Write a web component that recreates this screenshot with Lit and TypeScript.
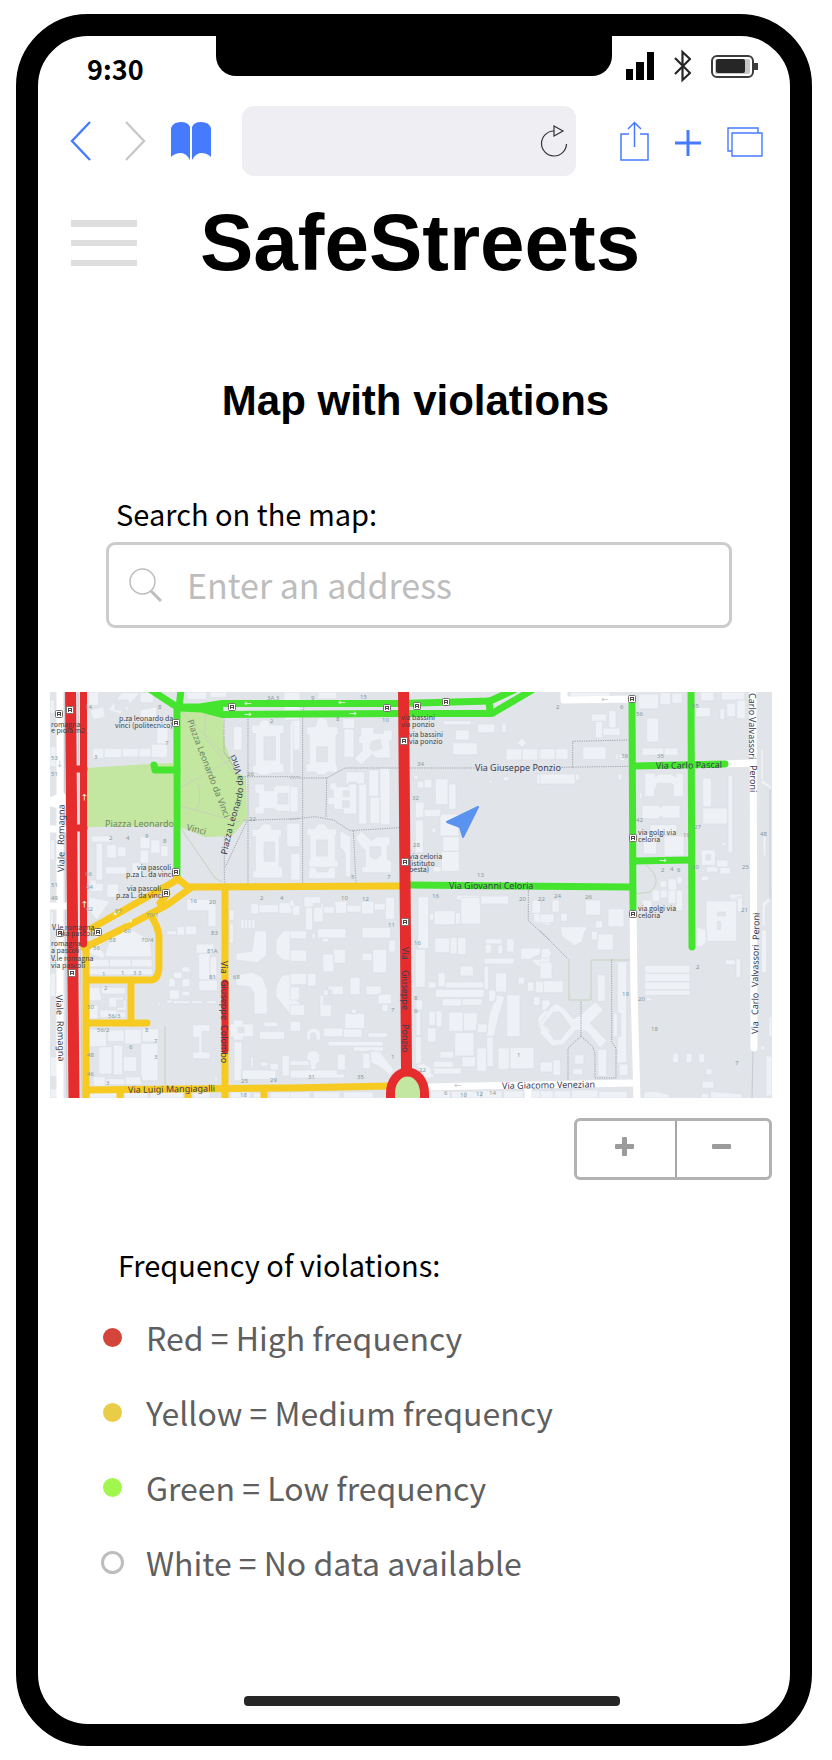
import { LitElement, html, svg, css } from "lit";
import { customElement } from "lit/decorators.js";

/* One square of the base map: footprints are drawn on a grid of a third of a map unit. */
interface Tile {
  at: string;
  rects: number[][];
  shapes: string;
  paths: string;
}

const tiles: Tile[] = [
  {
    at: "translate(40 680) scale(.333333)",
    rects: [
      [158, 205, 34, 30], [192, 205, 54, 28], [246, 205, 50, 26], [296, 205, 38, 26], [334, 192, 48, 40],
      [300, 38, 40, 30], [146, 36, 30, 40], [440, 36, 60, 22], [510, 36, 50, 16], [350, 130, 34, 62],
      [168, 490, 20, 120], [200, 494, 30, 40], [232, 500, 26, 30], [196, 560, 64, 22], [150, 600, 40, 34],
      [300, 470, 30, 36], [332, 480, 28, 40], [362, 498, 22, 32], [300, 510, 26, 40], [276, 548, 30, 44],
      [154, 468, 60, 18], [30, 60, 14, 40], [30, 200, 18, 60], [30, 480, 14, 60], [200, 612, 36, 40],
    ],
    shapes:
      "M205 90L245 38H300L240 102Z M225 60h40v30h-40z M635 135H656L664 120H684L690 135H732V160H722V250H732V278H696L684 285H660L650 278H638V256H646V160H635Z M672 170V240H706V170Z " +
      "M732 36H780V120H732Z M752 120H780V210H752Z M645 312H674V332H700V324L712 316H752L762 326H776V386H762L752 394H712L702 386H672V402H645V380H656V340H645Z M714 340V372H744V340Z " +
      "M636 448H656L668 432H690L696 448H724V470H718V560H728V594H638V572H646V470H636Z M672 486V544H704V486Z M740 430H780V500H740Z M752 520H780V600H752Z " +
      "M580 140h26v70h-26z M150 90L190 80L196 110L160 120Z M300 90L350 80V120H300Z",
    paths:
      "M552 112V215L600 290 M624 116V610 M600 290H780 M612 421L780 416 M620 425L556 560 M553 470V610",
  },
  {
    at: "translate(290 680) scale(.333333)",
    rects: [
      [158, 116, 36, 30], [162, 146, 30, 86], [460, 122, 84, 12], [563, 132, 52, 26], [496, 150, 42, 30],
      [488, 188, 74, 36], [636, 128, 12, 30], [648, 206, 48, 34], [696, 206, 48, 34], [744, 206, 40, 34],
      [740, 282, 44, 30], [640, 290, 18, 12], [598, 300, 8, 10], [382, 304, 20, 20], [402, 298, 24, 26],
      [436, 296, 38, 78], [476, 312, 22, 76], [520, 300, 4, 70], [376, 366, 26, 46], [402, 388, 50, 22],
      [376, 420, 24, 98], [450, 402, 56, 66], [458, 470, 50, 44], [454, 514, 54, 60], [426, 444, 12, 14],
      [168, 276, 56, 36], [206, 312, 24, 120], [236, 270, 30, 80], [270, 264, 30, 170], [240, 350, 30, 80],
      [430, 560, 24, 16], [372, 286, 12, 12], [0, 320, 24, 76], [500, 646, 70, 14], [570, 646, 86, 14],
    ],
    shapes:
      "M50 140H76L82 118L92 112L110 118L116 140H144V165H138V255H142V276H110L106 284H82L78 276H48V252H58V165H50Z M80 200V245H112V200Z " +
      "M212 142H252V160H280V150H306V182H298L302 234H258L248 222L214 254L194 236L216 212V190H206V168H212Z M246 184L270 178L276 204L252 214L238 204Z " +
      "M120 308H140V320H176V306H200V402H160V388H132V374H114V352H130V330H120Z M160 332V350H178V332Z M158 362V382H178V362Z " +
      "M50 446H74L84 432H104L114 446H140V466H136V540H144V562H118L112 576H82L76 562H56V540H60V466H50Z M80 480V528H112V480Z " +
      "M196 474L214 454L244 482L262 470H300V498H292V540H304V578H216V560H226V510L212 498Z M240 500V530L258 538L272 526V500Z " +
      "M682 188L696 174L710 188L696 202Z M58 562H136V596H56Z M150 452L182 470V590H166V520L150 500Z M84 36H140V56H84Z M0 130H10V280H0Z",
    paths:
      "M48 60L38 95V610 M0 294H110L165 264H327 M360 264H555 M110 294L108 412 M0 418L75 410L130 420L180 452L330 443 M190 452L198 610",
  },
  {
    at: "translate(540 680) scale(.333333)",
    rects: [
      [154, 102, 46, 22], [206, 92, 22, 52], [166, 124, 22, 50], [188, 144, 52, 22], [128, 200, 70, 38],
      [228, 222, 8, 16], [238, 222, 16, 20], [0, 206, 46, 32], [46, 206, 38, 32], [0, 282, 106, 30],
      [106, 282, 12, 18], [234, 282, 12, 18], [320, 114, 36, 72], [306, 204, 66, 22], [372, 204, 42, 22],
      [298, 338, 8, 18], [330, 434, 80, 30], [310, 460, 40, 62], [372, 468, 60, 60], [296, 42, 60, 44],
      [360, 38, 32, 36], [396, 40, 30, 30], [466, 82, 46, 28], [540, 86, 14, 32], [560, 70, 26, 40],
      [590, 60, 26, 56], [482, 36, 40, 26], [544, 36, 70, 24], [488, 294, 26, 86], [488, 384, 74, 48],
      [564, 286, 14, 232], [662, 206, 9, 94], [669, 464, 9, 64], [484, 588, 22, 14], [530, 540, 34, 22],
      [540, 562, 32, 20], [500, 560, 34, 16], [544, 488, 14, 8], [360, 602, 20, 20], [384, 596, 26, 40],
      [410, 590, 16, 22], [362, 626, 20, 28], [570, 642, 40, 18], [388, 640, 36, 20], [90, 36, 120, 14],
    ],
    shapes:
      "M314 280H346V290L356 282H394L408 292V280H430V350H400V314L390 310H352L344 330V350H314Z M306 376H354L362 384L370 376H420V414H370L362 408L354 416H306Z " +
      "M484 510H526V556H484Z M662 300H671L695 320V330L662 308Z M498 524V540H512V524Z",
    paths: "M98 262V184L266 180 M64 262L266 259",
  },
  {
    at: "translate(40 890) scale(.333333)",
    rects: [
      [30, 64, 10, 40], [30, 250, 16, 70], [30, 500, 24, 60], [30, 596, 30, 28], [148, 208, 60, 22],
      [208, 208, 66, 22], [274, 208, 62, 22], [148, 236, 190, 18], [148, 292, 36, 40], [180, 292, 76, 20],
      [206, 322, 44, 30], [148, 346, 26, 40], [180, 360, 76, 22], [230, 330, 28, 36], [146, 418, 54, 52],
      [202, 420, 50, 34], [254, 418, 50, 44], [306, 416, 50, 40], [176, 470, 40, 82], [220, 466, 28, 88],
      [250, 500, 40, 44], [302, 460, 52, 112], [160, 560, 36, 28], [196, 566, 60, 18], [256, 560, 50, 24],
      [380, 122, 30, 12], [410, 110, 24, 26], [436, 108, 34, 26], [400, 246, 52, 20], [426, 230, 24, 60],
      [386, 264, 20, 26], [388, 300, 30, 28], [426, 304, 24, 14], [468, 162, 54, 28], [476, 190, 34, 80],
      [510, 200, 20, 60], [476, 270, 56, 32], [380, 330, 18, 10], [398, 332, 50, 9], [455, 332, 32, 9],
      [500, 332, 28, 9], [354, 336, 6, 12], [524, 560, 8, 14], [632, 40, 24, 32], [656, 44, 60, 24],
      [716, 38, 40, 32], [756, 46, 24, 30], [602, 88, 10, 28], [613, 88, 10, 28], [624, 88, 10, 28],
      [635, 88, 10, 28], [568, 60, 14, 30], [570, 100, 10, 60], [672, 396, 40, 14], [658, 424, 76, 24],
      [582, 456, 24, 116], [604, 540, 104, 28], [632, 500, 8, 32], [660, 516, 24, 12], [690, 520, 26, 20],
      [726, 496, 22, 62], [756, 540, 24, 26], [150, 606, 86, 18], [254, 606, 70, 18], [330, 606, 100, 18],
      [460, 606, 50, 18], [572, 606, 60, 18], [640, 608, 24, 16], [690, 606, 90, 18],
    ],
    shapes:
      "M146 190L170 130L210 150L190 206Z M176 170L262 112L330 150L336 200H200Z M146 60V20L210 34L170 90Z M440 28H500L528 44V110H504V62H440Z " +
      "M458 404H510V424H486V486H510V506H458V486H476V442H458Z M644 122H680V196L652 218L588 210V190L636 184Z M588 256L636 246L668 262L682 300V372H642V310L630 290L588 286Z " +
      "M780 122H730L708 150V190L728 210H780V180H750V146H780Z M780 250L726 256L708 290V320L750 372H780V340L750 310V290L780 280Z M580 390H610V402H640V440H610V450H580V440H570V402H580Z M594 412V428H612V412Z",
    paths: "",
  },
  {
    at: "translate(290 890) scale(.333333)",
    rects: [
      [0, 30, 12, 20], [42, 20, 50, 32], [46, 52, 22, 68], [70, 40, 30, 56], [100, 50, 36, 20],
      [134, 34, 36, 36], [170, 46, 44, 20], [214, 34, 38, 38], [252, 40, 34, 20], [286, 22, 28, 66],
      [82, 116, 86, 28], [96, 144, 20, 12], [216, 112, 86, 32], [0, 122, 50, 24], [66, 130, 10, 16],
      [0, 180, 50, 34], [98, 192, 34, 54], [130, 178, 36, 42], [216, 190, 30, 22], [248, 178, 42, 70],
      [296, 150, 20, 36], [0, 250, 50, 34], [52, 250, 26, 38], [0, 290, 28, 40], [180, 262, 30, 52],
      [114, 288, 46, 26], [100, 300, 26, 44], [90, 316, 34, 64], [228, 288, 46, 26], [264, 312, 40, 30],
      [276, 342, 18, 22], [0, 344, 44, 32], [184, 358, 16, 14], [164, 370, 60, 46], [100, 414, 60, 26],
      [160, 416, 56, 26], [234, 428, 58, 14], [0, 394, 32, 30], [114, 454, 166, 14], [190, 470, 90, 14],
      [0, 512, 60, 14], [0, 540, 164, 24], [142, 492, 24, 60], [218, 490, 24, 46], [384, 20, 32, 156],
      [376, 178, 30, 114], [432, 62, 64, 42], [496, 68, 16, 34], [418, 70, 14, 20], [512, 22, 60, 80],
      [570, 18, 86, 24], [434, 144, 46, 44], [480, 142, 22, 50], [502, 142, 26, 52], [586, 146, 50, 16],
      [586, 162, 18, 28], [624, 164, 14, 28], [650, 146, 22, 40], [582, 204, 90, 18], [510, 228, 40, 30],
      [444, 248, 22, 42], [582, 228, 14, 70], [466, 276, 116, 18], [436, 298, 146, 24], [414, 276, 24, 18],
      [616, 248, 34, 58], [596, 300, 22, 34], [456, 326, 60, 22], [516, 326, 60, 20], [378, 330, 20, 30],
      [378, 366, 14, 70], [376, 440, 18, 82], [416, 364, 20, 50], [438, 362, 18, 48], [412, 406, 26, 50],
      [476, 366, 44, 58], [520, 368, 42, 54], [494, 428, 58, 70], [560, 402, 32, 26], [650, 314, 40, 126],
      [624, 474, 36, 64], [658, 472, 74, 64], [450, 484, 40, 20], [430, 514, 60, 18], [424, 534, 90, 18],
      [516, 500, 40, 30], [560, 474, 30, 70], [590, 440, 20, 90], [692, 174, 60, 34], [752, 174, 30, 20],
      [726, 30, 26, 40], [684, 262, 20, 20], [736, 274, 44, 34], [712, 276, 20, 28], [730, 320, 20, 26],
      [756, 330, 24, 30], [420, 602, 60, 22], [484, 604, 40, 20], [528, 604, 44, 20], [576, 602, 60, 22],
      [640, 602, 60, 22], [724, 602, 56, 22], [0, 606, 60, 18], [70, 606, 80, 18], [160, 606, 90, 18],
      [752, 516, 30, 30],
    ],
    shapes:
      "M50 506L52 490L64 482L80 484L90 496L88 514L78 524V540H62V524Z M50 430A22 22 0 0 1 92 430V450H78V432A10 10 0 0 0 62 432V450H50Z M238 480L270 486L312 540L300 556L270 530L240 516Z " +
      "M620 314L644 320L626 380L612 440H588L598 372Z M780 346L744 382V414L780 440V418L762 404V392L780 376Z M720 206L780 180V262H752V236Z M378 524L400 520L432 540V560L412 566Z M730 70L780 74V108L732 96Z",
    paths: "M715 0V92L780 152",
  },
  {
    at: "translate(540 890) scale(.333333)",
    rects: [
      [36, 30, 22, 36], [0, 72, 42, 26], [62, 70, 20, 24], [136, 30, 46, 46], [204, 56, 48, 54],
      [166, 92, 22, 22], [154, 124, 20, 26], [172, 132, 48, 48], [0, 216, 36, 50], [10, 272, 60, 36],
      [232, 216, 28, 302], [172, 254, 24, 80], [220, 370, 22, 70], [174, 478, 26, 80], [104, 494, 28, 28],
      [98, 536, 30, 18], [238, 522, 26, 34], [0, 516, 38, 30], [38, 510, 24, 46], [314, 226, 136, 24],
      [314, 250, 136, 25], [314, 275, 136, 25], [314, 300, 136, 16], [318, 324, 18, 8], [398, 490, 18, 28],
      [438, 490, 18, 28], [476, 490, 18, 28], [498, 536, 18, 18], [486, 574, 36, 20], [484, 610, 22, 14],
      [588, 206, 14, 56], [556, 210, 30, 14], [568, 12, 40, 12], [592, 20, 16, 44],
      [664, 120, 16, 128], [686, 380, 10, 60], [678, 498, 18, 120], [662, 466, 12, 14], [306, 30, 30, 30],
      [336, 0, 24, 34], [360, 0, 22, 24], [384, 0, 24, 40], [408, 0, 20, 62], [0, 602, 40, 22],
      [42, 602, 50, 22], [94, 600, 80, 24], [176, 604, 86, 20],
    ],
    shapes:
      "M498 32H590V154H498Z M532 66V78H556V66Z M532 94V118H542V94Z M60 110H140V124H134L126 156L100 168L94 158L82 152L66 138Z M4 180A18 18 0 0 1 34 190A18 18 0 0 1 4 200Z M312 606L350 604L388 614V624H312Z M512 604L606 612V624H512Z M666 40L695 14V30L676 48V108H666Z M470 112L500 118V154L486 170H470Z " +
      "M0 400L32 352L48 340L70 352L100 386L122 374L166 336L190 360L150 400L200 452L180 474L140 424L108 420L68 464L36 468L0 430Z M10 404L42 448H62L92 410L60 366H40Z",
    paths:
      "M0 122L85 208 M215 208V455L228 475V564H165V490L158 470L123 438V332 M123 438L84 475V570",
  },
];

const whiteRoads = [
  "M60 690V1100", "M48 829H68", "M48 906H68", "M48 802L62 796V806Z", "M564 690V700L632 699V704",
  "M633 905L634 990L637 1100", "M425 1087L633 1083", "M528 1086V1100", "M722 764L752 763", "M753 690L754 1048",
];
const yellowRoads = [
  "M177 880L140 901L92 928", "M177 878L188 887L400 886", "M192 887L167 905L120 930L84 948", "M167 894L160 903",
  "M150 914Q158 926 159 936V968Q158 980 151 980H87", "M131 980V1023", "M88 1023H147", "M86 944V1100",
  "M225 887V1100", "M86 1090L290 1088L390 1086", "M120 1090V1100", "M188 1090V1100", "M264 1089V1100",
];
const greenRoads = [
  "M148 688L177 707", "M181 690L179 708", "M177 706V876", "M154 765L155 770H177",
  "M178 707H200L222 703.5H400L490 701L514 690", "M180 708L202 709L223 714.5L400 713.5H492L532 690", "M200 708L220 709",
  "M489 701L490 713", "M410 885L630 887", "M632 703L633 909", "M691 690L692 947", "M635 766L725 764", "M633 861L690 860",
];
const thinRed = ["M83.5 690L83.5 944", "M76 769H84", "M76 828H84", "M225 983V1050"];

type Label = [x: number, y: number, text: string, turn?: number];

/* Names on steep streets are set word by word, as the words stand far apart there. */
const streets: Label[] = [
  [475, 771, "Via  Giuseppe  Ponzio"],
  [449, 889, "Via  Giovanni  Celoria"],
  [656, 769, "Via  Carlo  Pascal", -1],
  [502, 1089, "Via  Giacomo  Venezian", -1],
  [128, 1093, "Via  Luigi  Mangiagalli", -1],
  [64, 872, "Viale", -89], [64, 845, "Romagna", -89],
  [56, 995, "Viale", 88], [57, 1021, "Romagna", 88],
  [749, 693, "Carlo", 90], [749, 717, "Valvassori", 90], [750, 765, "Peroni", 90],
  [758, 1034, "Via", -89], [758, 1015, "Carlo", -89], [758, 987, "Valvassori", -89], [759, 940, "Peroni", -89],
  [221, 961, "Via", 90], [221, 980, "Giuseppe", 90], [221, 1025, "Colombo", 90],
  [402, 947, "Via", 90], [402, 970, "Giuseppe", 90], [402, 1024, "Ponzio", 90],
];
const squares: Label[] = [
  [105, 827, "Piazza  Leonardo"],
  [186, 830, "Vinci", 14],
  [187, 721, "Piazza  Leonardo  da  Vinci", 69],
];
const stops: Label[] = [
  [119, 721, "p.za leonardo da"], [115, 728, "vinci (politecnico)"],
  [137, 870, "via pascoli"], [126, 877, "p.za L. da vinci"],
  [127, 891, "via pascoli"], [116, 898, "p.za L. da vinci"],
  [51, 727, "romagna"], [51, 733, "e piola m2"],
  [52, 930, "V.le romagna"], [60, 936, "via pascoli"],
  [51, 946, "romagna"], [51, 953, "a pascoli"],
  [51, 961, "V.le romagna"], [51, 968, "via pascoli"],
  [401, 720, "via bassini"], [401, 727, "via ponzio"],
  [409, 737, "via bassini"], [409, 744, "via ponzio"],
  [409, 859, "via celoria"], [409, 866, "(istituto"], [409, 872, "besta)"],
  [638, 835, "via golgi via"], [638, 842, "celoria"],
  [638, 911, "via golgi via"], [638, 918, "celoria"],
];
const numbers: Label[] = [
  [85, 709, "14"], [158, 709, "8"], [94, 759, "3"], [165, 745, "7"], [267, 700, "3A  3"], [270, 723, "2"],
  [109, 840, "2"], [126, 840, "4"], [145, 838, "9"], [163, 843, "8"], [85, 876, "66"], [86, 889, "64"],
  [51, 760, "53"], [51, 776, "51"], [51, 887, "51"], [51, 900, "49"], [247, 776, "26"], [249, 821, "22"],
  [311, 700, "9"], [360, 699, "15"], [336, 721, "8"], [382, 722, "10"], [417, 766, "34"], [412, 800, "32"],
  [413, 847, "28"], [477, 877, "13"], [351, 879, "5"], [387, 879, "7"], [341, 900, "10"], [362, 901, "12"],
  [432, 898, "16"], [556, 709, "2"], [620, 709, "6"], [636, 716, "56"], [621, 758, "39"], [657, 758, "35"],
  [692, 708, "55"], [636, 822, "42"], [683, 837, "19"], [694, 829, "27"], [692, 869, "20"], [760, 836, "48"],
  [742, 869, "25"], [661, 872, "2"], [670, 871, "4"], [677, 872, "6"], [554, 898, "24"], [585, 899, "26"],
  [519, 901, "20"], [538, 901, "22"], [86, 911, "62"], [115, 913, "57"], [146, 917, "70/1"], [141, 942, "70/4"],
  [109, 942, "58"], [93, 950, "56"], [124, 933, "60"], [190, 903, "16"], [209, 904, "20"], [260, 900, "2"],
  [280, 900, "4"], [211, 935, "83"], [207, 953, "81A"], [209, 979, "81"], [233, 979, "68"], [102, 976, "1"],
  [121, 975, "1"], [133, 975, "3  3"], [104, 990, "2"], [108, 1018, "56/3"], [87, 1009, "50"], [97, 1032, "56/2"],
  [145, 1032, "8"], [154, 1043, "7"], [129, 1049, "6"], [154, 1059, "3"], [87, 1057, "48"], [87, 1076, "46"],
  [106, 1085, "3"], [241, 1083, "25"], [270, 1082, "29"], [240, 1097, "18"],
  [388, 927, "11"], [414, 945, "16"], [414, 1000, "8"], [414, 1013, "6"], [391, 1012, "7"], [391, 1059, "1"],
  [419, 1072, "22"], [308, 1079, "31"], [357, 1079, "35"], [444, 1095, "6"], [460, 1097, "10"], [476, 1096, "12"],
  [489, 1095, "14"], [517, 1057, "1"], [622, 996, "19"], [638, 1001, "20"], [696, 969, "2"], [741, 912, "21"],
  [651, 1031, "18"], [735, 1065, "7"],
];
const arrows: Label[] = [
  [244, 706, "←"], [244, 717, "→"], [338, 705, "←"], [349, 716, "→"], [659, 863, "→"],
  [87, 801, "→", -90], [87, 908, "→", -90], [115, 917, "←", -27], [127, 926, "→", -27],
];
const paleArrows: Label[] = [[601, 702, "←"], [454, 1088, "←"], [57, 760, "→", 90]];
const badges: number[][] = [
  [59, 714], [70, 710], [176, 723], [176, 872], [166, 893], [232, 707], [387, 708], [417, 706], [446, 702],
  [404, 741], [405, 862], [405, 922], [632, 699], [633, 838], [633, 914], [98, 932], [60, 933], [72, 973],
];

const drawLabels = (list: Label[]) =>
  list.map(([x, y, text, turn]) => svg`<text x=${x} y=${y} transform=${`rotate(${turn ?? 0} ${x} ${y})`}>${text}</text>`);
const drawRoads = (list: string[]) => list.map((d) => svg`<path d=${d} />`);

@customElement("violations-map")
export class ViolationsMap extends LitElement {
  static styles = css`
    :host { display: block; }
    .map { display: block; width: 100%; height: auto; background: #e1e4e9; font-family: "Noto Sans", sans-serif; }
    .park { fill: #c3e6a0; }
    .buildings { fill: #eef2f6; stroke: #dce0e6; stroke-width: 2; }
    .walks { fill: none; stroke: #a3a6ae; stroke-width: 3; stroke-dasharray: 4 3; }
    .trail { fill: none; stroke: #c6d3bb; stroke-width: 1; }
    .road { fill: none; stroke-width: 7; stroke-linejoin: round; stroke-linecap: round; }
    .white { stroke: #fff; }
    .yellow { stroke: #f6ca20; }
    .green { stroke: #45e52f; }
    .red { stroke: #e52d2d; }
    .wide { stroke-width: 11; }
    .kerb { stroke: #c6cad2; stroke-width: 1; fill: none; }
    .roundabout { fill: #c3e6a0; stroke: #e52d2d; stroke-width: 9; }
    .streets, .squares, .stops, .numbers { white-space: pre; }
    .streets { font-size: 9px; fill: #3b3b52; }
    .squares { font-size: 9px; fill: #6f8467; }
    .stops { font-size: 7px; fill: #3d3d44; font-family: "Noto Sans CJK SC", "Noto Sans", sans-serif; }
    .numbers { font-size: 6px; fill: #84999c; }
    .arrows { font-size: 9px; fill: #e8ffe4; font-family: "DejaVu Sans", sans-serif; }
    .pale { fill: #c4c6cb; }
    .badge { fill: #fff; stroke: #77716c; stroke-width: 1; }
    .bus { fill: #4d4743; }
    .here { fill: #5a93ef; stroke: #5a93ef; stroke-width: 2; stroke-linejoin: round; }
  `;

  render() {
    return html`
      <svg class="map" viewBox="50 692 722 406" role="img" aria-label="Map with violations">
        <g class="park">
          <path d="M87 768L150 764L173 763V826L87 827Z" />
          <path d="M180 711L222 713L225 745L236 772L246 778L247 818L232 836L205 837L180 827Z" />
        </g>
        <path class="trail" d="M182 712L230 760L180 788M198 783Q202 800 196 812M180 806L240 822M205 712V738L236 775M180 827L215 878L222 882M165 1026V1085M569 960V1000H591V960H630M646 865Q664 880 650 892L636 894" />
        ${tiles.map(
          (tile) => svg`<g transform=${tile.at}>
            <path class="buildings" fill-rule="evenodd" d=${tile.rects.map(([x, y, w, h]) => `M${x} ${y}h${w}v${h}h${-w}z`).join("") + tile.shapes} />
            <path class="walks" d=${tile.paths} />
          </g>`,
        )}
        <path class="kerb" d="M64 692L67 1098M78 692L82 1098M770 790V900M753 1050L752 1098" />
        <g class="road white">${drawRoads(whiteRoads)}</g>
        <g class="road green">${drawRoads(greenRoads)}</g>
        <g class="road yellow">${drawRoads(yellowRoads)}</g>
        <g class="road red">${drawRoads(thinRed)}</g>
        <path class="road red wide" d="M70.5 686L74 1104" />
        <path class="road red wide" d="M403.5 686L406.5 1070" />
        <path class="roundabout" d="M390.5 1104V1093A17 21 0 0 1 424.5 1093V1104" />
        <g class="arrows">${drawLabels(arrows)}</g>
        <g class="arrows pale">${drawLabels(paleArrows)}</g>
        ${badges.map(
          ([x, y]) => svg`<rect class="badge" x=${x - 3.5} y=${y - 3.5} width="7" height="7" rx="1" />
            <path class="bus" fill-rule="evenodd" d=${`M${x - 2} ${y - 2}h4v4h-1v-1h-2v1h-1z M${x - 1} ${y - 1}v1h2v-1z`} />`,
        )}
        <g class="numbers">${drawLabels(numbers)}</g>
        <g class="squares">${drawLabels(squares)}</g>
        <g class="stops">${drawLabels(stops)}</g>
        <g class="streets">
          ${drawLabels(streets)}
          <path id="bend" fill="none" d="M227 855Q233 824 241 802Q248 775 230 746" />
          <text><textPath href="#bend">Piazza  Leonardo  da  Vinci</textPath></text>
        </g>
        <path class="here" d="M478 807L447 822L460 827L463 837Z" />
      </svg>
    `;
  }
}

const legend = [
  { tone: "high", text: "Red = High frequency" },
  { tone: "medium", text: "Yellow = Medium frequency" },
  { tone: "low", text: "Green = Low frequency" },
  { tone: "none", text: "White = No data available" },
];

@customElement("app-root")
export class AppRoot extends LitElement {
  static styles = css`
    :host { display: block; background: #fff; color: #000; font-family: "Noto Sans CJK SC", "Noto Sans", sans-serif; }
    * { box-sizing: border-box; }
    button { padding: 0; border: 0; background: none; color: inherit; font: inherit; display: flex; align-items: center; justify-content: center; cursor: pointer; }
    svg { display: block; }
    h1, h2, h3, ul { margin: 0; padding: 0; }
    .phone { margin: 14px 20px 14px 16px; border: 22px solid #000; border-radius: 72px; padding-bottom: 18px; }

    .status { display: grid; grid-template-columns: 1fr 396px 1fr; height: 70px; }
    .time { padding: 13px 0 0 49px; font-size: 27px; line-height: 40px; font-weight: 700; }
    .notch { height: 40px; background: #000; border-radius: 0 0 20px 20px; }
    .signals { display: flex; align-items: center; justify-content: flex-end; gap: 20px; height: 60px; padding-right: 32px; }

    .toolbar { display: flex; align-items: center; height: 70px; padding: 0 27px 0 32px; color: #467bff; }
    .nav { display: flex; align-items: center; gap: 34px; margin-right: 25px; }
    .address { flex: 1; min-width: 0; display: flex; align-items: center; height: 70px; margin: 0 44px 0 31px; padding-right: 8px; border-radius: 12px; background: #eeeef3; }
    .address input { flex: 1; min-width: 0; height: 100%; padding: 0 16px; border: 0; background: none; font: inherit; font-size: 24px; outline: none; }
    .tools { display: flex; align-items: center; gap: 26px; }

    .brand { display: flex; align-items: center; gap: 63px; margin: 27px 32px 0 33px; }
    .brand h1 { font: 700 80px/80px "Liberation Sans", Arial, sans-serif; }
    .subtitle { margin: 94px 32px 0 35px; text-align: center; font: 700 42px/48px "Liberation Sans", Arial, sans-serif; }

    .search { margin: 68px 58px 0 68px; }
    .search label { display: block; padding-left: 10px; font-size: 29px; line-height: 40px; }
    .box { display: flex; align-items: center; gap: 24px; height: 86px; margin-top: 9px; padding-left: 20px; border: 3px solid #ccc; border-radius: 9px; }
    .box input { flex: 1; min-width: 0; height: 100%; padding: 0 0 2px; border: 0; outline: none; background: none; font: inherit; font-size: 34px; }
    .box input::placeholder { color: #bdbdbd; opacity: 1; }

    .view { margin: 64px 18px 0 12px; }
    .zoom { display: grid; grid-template-columns: 51fr 49fr; width: 198px; height: 62px; margin: 20px 0 0 auto; border: 3px solid #b2b2b2; border-radius: 6px; }
    .zoom button { padding: 0 3px 6px 0; }
    .zoom button + button { border-left: 2px solid #a6a6a6; }

    .legend { margin: 64px 58px 0 63px; }
    .legend h3 { padding-left: 17px; font-size: 29px; line-height: 40px; font-weight: 400; }
    .legend ul { list-style: none; display: flex; flex-direction: column; gap: 27px; margin-top: 29px; }
    .legend li { display: flex; align-items: center; gap: 22px; color: #5f5f5f; font-size: 32px; line-height: 48px; }
    .dot { flex: none; width: 23px; height: 23px; border: 2px solid #fff; border-radius: 50%; }
    .high { background-color: #d3453a; }
    .medium { background-color: #e9cc48; }
    .low { background-color: #a1f74d; }
    .none { border: 3px solid #bdbdbd; }

    .home { width: 50%; height: 10px; margin: 110px auto 0 206px; border-radius: 4px; background: #262626; }
  `;

  render() {
    return html`
      <div class="phone">
        <div class="status">
          <div class="time">9:30</div>
          <div class="notch"></div>
          <div class="signals">
            <svg width="28" height="28" viewBox="0 0 28 28"><path d="M0 17h7v11H0zM10 10h8v18h-8zM21 0h7v28h-7z" /></svg>
            <svg width="17" height="34" viewBox="0 0 17 34" fill="none" stroke="#262626" stroke-width="2.2"><path d="M1 9L16 24L8.500 31V3L16 10L1 25" /></svg>
            <svg width="47" height="24" viewBox="0 0 47 24">
              <rect x="1" y="2" width="41" height="21" rx="5" fill="#fff" stroke="#3c3c3c" stroke-width="2" />
              <rect x="4" y="5" width="35" height="15" rx="2" fill="#c6c6c6" />
              <rect x="5" y="5" width="29" height="14" rx="2" fill="#262626" />
              <path d="M43 9h4v7h-4z" fill="#3c3c3c" />
            </svg>
          </div>
        </div>

        <div class="toolbar">
          <div class="nav">
            <button aria-label="Back"><svg width="21" height="40" viewBox="0 0 21 40" fill="none" stroke="#467bff" stroke-width="2.400"><path d="M20 1L2 20L20 39" /></svg></button>
            <button aria-label="Forward"><svg width="21" height="40" viewBox="0 0 21 40" fill="none" stroke="#c8c8cc" stroke-width="2.400"><path d="M1 1L19 20L1 39" /></svg></button>
          </div>
          <button aria-label="Bookmarks">
            <svg width="40" height="38" viewBox="0 0 40 38" fill="currentColor">
              <path d="M0 6Q2 0 10 0Q17 0 19 5V38Q15 31 10 31Q4 31 0 35Z" />
              <path d="M40 6Q38 0 30 0Q23 0 21 5V38Q25 31 30 31Q36 31 40 35Z" />
            </svg>
          </button>
          <div class="address">
            <input type="text" aria-label="Address" />
            <button aria-label="Reload">
              <svg width="28" height="32" viewBox="0 0 28 32" fill="none" stroke="#333" stroke-width="1.200">
                <path d="M14 6A12.500 12.500 0 1 0 26.500 19" />
                <path d="M14 1L23 6L14 11Z" />
              </svg>
            </button>
          </div>
          <div class="tools">
            <button aria-label="Share">
              <svg width="29" height="40" viewBox="0 0 29 40" fill="none" stroke="currentColor" stroke-width="1.500"><path d="M9 13H1V39H28V13H20M14.500 26V2M8 8L14.500 1.500L21 8" /></svg>
            </button>
            <button aria-label="New tab">
              <svg width="26" height="30" viewBox="0 0 26 30" fill="none" stroke="currentColor" stroke-width="3"><path d="M0 17H26M13 4V30" /></svg>
            </button>
            <button aria-label="Tabs">
              <svg width="36" height="32" viewBox="0 0 36 32" fill="none" stroke="currentColor" stroke-width="1.400"><path d="M5 26H1V3H31V8" /><path d="M5 8H35V31H5Z" /></svg>
            </button>
          </div>
        </div>

        <header class="brand">
          <button aria-label="Menu"><svg width="66" height="46" viewBox="0 0 66 46" fill="#dedede"><path d="M0 0H66V7H0zM0 20H66V26H0zM0 40H66V46H0z" /></svg></button>
          <h1>SafeStreets</h1>
        </header>
        <h2 class="subtitle">Map with violations</h2>

        <div class="search">
          <label for="place">Search on the map:</label>
          <div class="box">
            <svg width="34" height="34" viewBox="0 0 34 34" fill="none" stroke="#bdbdbd">
              <circle cx="13.500" cy="13.500" r="12.500" stroke-width="1.500" />
              <path d="M22 23L32 33" stroke-width="3" />
            </svg>
            <input id="place" type="text" placeholder="Enter an address" />
          </div>
        </div>

        <div class="view">
          <violations-map></violations-map>
          <div class="zoom">
            <button aria-label="Zoom in"><svg width="19" height="19" viewBox="0 0 19 19" fill="#9b9b9b"><rect y="7" width="19" height="5" rx="1" /><rect x="7" width="5" height="19" rx="1" /></svg></button>
            <button aria-label="Zoom out"><svg width="19" height="19" viewBox="0 0 19 19" fill="#9b9b9b"><rect y="7" width="19" height="5" rx="1" /></svg></button>
          </div>
        </div>

        <section class="legend">
          <h3>Frequency of violations:</h3>
          <ul>
            ${legend.map((row) => html`<li><span class="dot ${row.tone}"></span>${row.text}</li>`)}
          </ul>
        </section>
        <div class="home"></div>
      </div>
    `;
  }
}
